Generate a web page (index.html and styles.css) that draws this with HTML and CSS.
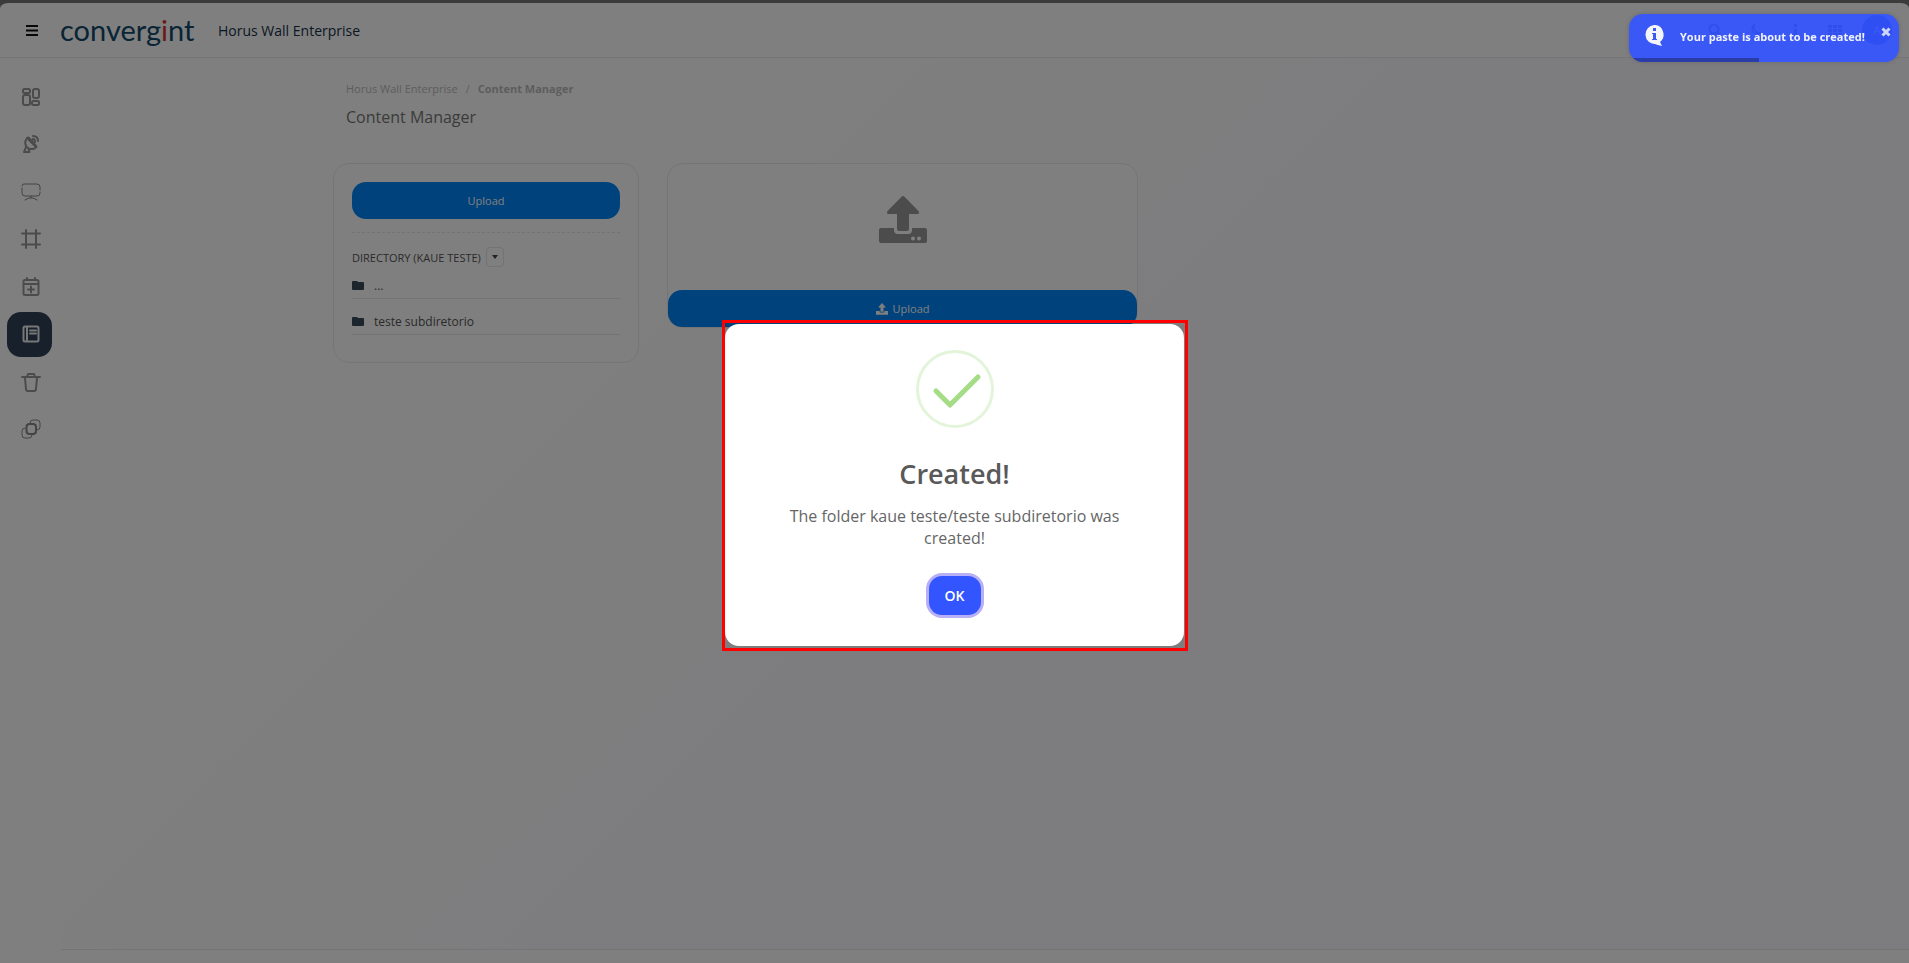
FILE: index.html
```html
<!DOCTYPE html>
<html lang="en">
<head>
    <meta charset="UTF-8">
    <meta name="viewport" content="width=device-width, initial-scale=1.0">
    <title>Content Manager - Horus Wall Enterprise</title>
    <link rel="stylesheet" href="styles.css">
</head>
<body>
    <div class="page">
        <header class="topbar">
            <button class="menu-btn" type="button" aria-label="Menu">
                <svg width="12" height="11" viewBox="0 0 12 11"><path d="M0 1h12M0 5.500h12M0 10h12" stroke="currentColor" stroke-width="2"/></svg>
            </button>
            <a class="logo" href="#">
                <span>converg<span class="logo-i">i</span>nt</span>
                <svg width="3" height="3" viewBox="0 0 3 3"><circle cx="1.500" cy="1.500" r="1" fill="#6f93a8"/></svg>
            </a>
            <span class="brand">Horus Wall Enterprise</span>
            <div class="topbar-tools">
                <button type="button" aria-label="Search"><svg width="14" height="14" viewBox="0 0 14 14"><path d="M10 10l3 3M1.500 6a4.500 4.500 0 1 0 9 0a4.500 4.500 0 1 0-9 0" fill="none" stroke="currentColor" stroke-width="2"/></svg></button>
                <button type="button" aria-label="Dark mode"><svg width="14" height="14" viewBox="0 0 14 14"><path d="M6 2a5 5 0 1 0 6 8A6 6 0 0 1 6 2z" fill="none" stroke="currentColor" stroke-width="1.500"/></svg></button>
                <button type="button" aria-label="Info"><svg width="14" height="14" viewBox="0 0 14 14"><path d="M6 1h3v3H6zM5 6h4v6h1v1H5v-1h1V7H5z" fill="currentColor"/></svg></button>
                <button type="button" aria-label="Apps"><svg width="14" height="14" viewBox="0 0 14 14"><path d="M0 2h4v3H0zM5 2h4v3H5zM10 2h4v3h-4zM0 6h4v3H0zM5 6h4v3H5zM10 6h4v3h-4zM0 10h4v3H0zM5 10h4v3H5zM10 10h4v3h-4z" fill="currentColor"/></svg></button>
                <button class="avatar" type="button">A</button>
            </div>
        </header>

        <div class="layout">
            <nav class="sidebar" aria-label="Main">
                <a href="#" aria-label="Dashboard"><svg viewBox="0 0 20 20"><rect x="2" y="2" width="7" height="4" rx="1.500"/><rect x="2" y="8" width="7" height="10" rx="2"/><rect x="12" y="2" width="6" height="9" rx="2"/><rect x="11" y="14" width="7" height="4" rx="1.500"/></svg></a>
                <a href="#" aria-label="Signal"><svg viewBox="0 0 20 20"><path d="M6 4C3 8 4 12 7 14s7 1 8-1zM6 4q1-1 2 0l7 8q1 1 0 1M5 13l-2 5h5.500l-1-3M10 8l2-3M12 5q2 0 2 3M12 2q5 0 5 5"/></svg></a>
                <a href="#" aria-label="Displays"><svg class="thin" viewBox="0 0 20 20"><path d="M1 4q0-2 2-2h13q3 0 3 3v3M19 10v1q0 3-3 3H4q-3 0-3-3V6M10 14v2M4 18l4-2h4l4 2"/></svg></a>
                <a href="#" aria-label="Layouts"><svg viewBox="0 0 20 20"><path d="M5 1v18M15 1v18M1 4.500h18M1 15.500h18"/></svg></a>
                <a href="#" aria-label="Schedule"><svg viewBox="0 0 20 20"><rect x="2.500" y="3" width="15" height="15" rx="1.500"/><path d="M6 1v2M14 1v2M3 7h14M10 9.500v6M7 12.500h6"/></svg></a>
                <a class="active" href="#" aria-label="Content Manager"><svg viewBox="0 0 20 20"><rect x="2.500" y="2.500" width="15" height="15" rx="1.500"/><path d="M6 3v14M9 6.500h6M9 9.500h6"/></svg></a>
                <a href="#" aria-label="Trash"><svg viewBox="0 0 20 20"><path d="M1 5h18M6 5l1-3h6l1 3M4 6l1 11q0 2 2 2h6q2 0 2-2l1-11"/></svg></a>
                <a href="#" aria-label="Integrations"><svg class="thin" viewBox="0 0 20 20"><rect x="5.500" y="5" width="9.500" height="10" rx="3" stroke-width="2"/><path d="M9 4q0-3 3-3h4q3 0 3 3v4q0 3-3 3M11 16q0 3-3 3H4q-3 0-3-3v-4q0-3 3-3"/></svg></a>
            </nav>

            <main class="main">
                <div class="container">
                    <nav class="breadcrumb" aria-label="Breadcrumb">
                        <a href="#">Horus Wall Enterprise</a>
                        <span>/</span>
                        <strong>Content Manager</strong>
                    </nav>
                    <h1>Content Manager</h1>

                    <div class="cards">
                        <section class="card directory">
                            <button class="btn" type="button">Upload</button>
                            <hr>
                            <div class="directory-head">
                                <span>DIRECTORY (KAUE TESTE)</span>
                                <button class="caret-btn" type="button" aria-label="Directory options">
                                    <svg width="6" height="4" viewBox="0 0 6 4"><path d="M0 0h6L3 4z" fill="currentColor"/></svg>
                                </button>
                            </div>
                            <ul class="folders">
                                <li>
                                    <svg width="12" height="9" viewBox="0 0 12 9"><path d="M0 1q0-1 1-1h4l1 1h5q1 0 1 1v6q0 1-1 1H1q-1 0-1-1z" fill="currentColor"/></svg>
                                    <a href="#">...</a>
                                </li>
                                <li>
                                    <svg width="12" height="9" viewBox="0 0 12 9"><path d="M0 1q0-1 1-1h4l1 1h5q1 0 1 1v6q0 1-1 1H1q-1 0-1-1z" fill="currentColor"/></svg>
                                    <a href="#">teste subdiretorio</a>
                                </li>
                            </ul>
                        </section>

                        <section class="card dropzone">
                            <div class="dropzone-area">
                                <svg width="48" height="48" viewBox="0 0 48 48" fill="currentColor"><path d="M22.500.8q1.500-1.500 3 0L39.500 15q1.500 3-1 3H30v15q0 2-2 2h-8q-2 0-2-2V18H9.500q-2.500 0-1-3z"/><path fill-rule="evenodd" d="M2 32h13v2q0 4 4 4h10q4 0 4-4v-2h13q2 0 2 2v11q0 2-2 2H2q-2 0-2-2V34q0-2 2-2zM32 42.500a2 2 0 1 0 4 0a2 2 0 1 0-4 0M38 42.500a2 2 0 1 0 4 0a2 2 0 1 0-4 0"/></svg>
                            </div>
                            <button class="btn" type="button">
                                <svg width="12" height="12" viewBox="0 0 48 48" fill="currentColor"><path d="M24 0l16 18H30v17H18V18H8z"/><path d="M0 32h15v6h18v-6h15v15H0z"/></svg>
                                Upload
                            </button>
                        </section>
                    </div>
                </div>
            </main>
        </div>

        <footer class="footer"></footer>
    </div>

    <div class="overlay">
        <div class="highlight">
            <div class="modal" role="dialog" aria-labelledby="modal-title">
                <svg class="modal-icon" width="78" height="78" viewBox="0 0 78 78" fill="none">
                    <circle cx="39" cy="39" r="37.500" stroke="#e4f4db" stroke-width="3"/>
                    <path d="M20 41l14 14 28-28" stroke="#a5dc86" stroke-width="5" stroke-linecap="round" stroke-linejoin="round"/>
                </svg>
                <h2 id="modal-title">Created!</h2>
                <p>The folder kaue teste/teste subdiretorio was created!</p>
                <button class="ok-btn" type="button">OK</button>
            </div>
        </div>
    </div>

    <div class="toast" role="status">
        <svg width="19" height="22" viewBox="0 0 19 22"><path d="M9 0a9 9.500 0 0 1 6 17l2 4q-5-1-7-2A9 9.500 0 1 1 9 0z" fill="#f4f5fa"/><path d="M8 3h3v3H8zM7 8h4v6h1v1H7v-1h1V9H7z" fill="#3d5af3"/></svg>
        <span class="toast-text">Your paste is about to be created!</span>
        <button class="toast-close" type="button" aria-label="Close">
            <svg width="10" height="10" viewBox="0 0 10 10"><path d="M1.500 1.500l7 7M8.500 1.500l-7 7" stroke="currentColor" stroke-width="3"/></svg>
        </button>
        <div class="toast-progress"></div>
    </div>
</body>
</html>
```

FILE: styles.css
```css
* {
    box-sizing: border-box;
}
body {
    font-family: 'Open Sans', 'Noto Sans', sans-serif;
    font-size: 12px;
    margin: 0;
    background-color: #777;
    color: #555;
}
button {
    font-family: inherit;
    border: none;
    padding: 0;
    background: none;
    cursor: pointer;
}
a {
    color: inherit;
    text-decoration: none;
}
svg {
    display: block;
}
.page {
    display: flex;
    flex-direction: column;
    min-height: 100vh;
    border-top: 3px solid #777;
    background-color: #fff;
    background-clip: padding-box;
    border-radius: 8px 8px 0 0;
}

/* top bar */
.topbar {
    display: flex;
    align-items: center;
    height: 55px;
    padding: 0 17px 0 26px;
    border-bottom: 1px solid #ebebeb;
}
.menu-btn {
    color: #111;
}
.logo {
    display: flex;
    align-items: center;
    width: 135px;
    margin-left: 22px;
    font-family: Lato, sans-serif;
    font-size: 29px;
    line-height: 36px;
    color: #124a6b;
}
.logo svg {
    margin: 0 0 17px 1px;
}
.logo .logo-i {
    color: #d8322c;
}
.brand {
    margin-left: 23px;
    font-size: 14px;
    font-weight: 500;
    color: #14304a;
}
.topbar-tools {
    display: flex;
    align-items: center;
    gap: 26px;
    margin-left: auto;
    color: #333;
}
.avatar {
    width: 30px;
    height: 30px;
    margin-left: -6px;
    border-radius: 50%;
    background-color: #0b1fd0;
    color: #fff;
}

/* sidebar */
.layout {
    display: flex;
    flex: 1;
}
.sidebar {
    display: flex;
    flex-direction: column;
    justify-content: space-between;
    width: 61px;
    height: 394px;
    padding: 16px 9px 0 7px;
}
.sidebar a {
    display: flex;
    align-items: center;
    justify-content: center;
    width: 45px;
    height: 45px;
    border-radius: 14px;
    color: #969696;
}
.sidebar svg {
    width: 20px;
    height: 20px;
    margin-left: 3px;
    fill: none;
    stroke: currentColor;
    stroke-width: 2;
    stroke-linecap: round;
    stroke-linejoin: round;
}
.sidebar .thin {
    stroke-width: 1;
    color: #888;
}
.sidebar .active {
    background-color: #304356;
    color: #eee;
}

/* content */
.main {
    flex: 1;
    padding: 23px 20px;
    background: linear-gradient(135deg, #fff 20%, #fbfbfe 50%);
}
.container {
    max-width: 1304px;
    margin: 0 auto;
}
.breadcrumb {
    display: flex;
    gap: 8px;
    padding-left: 13px;
    font-size: 11px;
    line-height: 16px;
    color: #bbb;
}
h1 {
    margin: 8px 0 34px 13px;
    font-size: 16px;
    line-height: 24px;
    font-weight: 400;
    color: #777;
}
.cards {
    display: grid;
    grid-template-columns: 13fr 20fr 20fr;
    align-items: start;
    gap: 28px;
}
.card {
    border: 1px solid #ebebeb;
    border-radius: 16px;
    background-color: #fff;
}
.btn {
    display: flex;
    align-items: center;
    justify-content: center;
    gap: 5px;
    width: 100%;
    height: 37px;
    border-radius: 14px;
    background-color: #0084f8;
    color: #fff;
    font-size: 11px;
}
.directory {
    padding: 18px 18px 27px;
}
.directory hr {
    margin: 13px 0 14px;
    border: none;
    border-top: 1px dashed #e6e6e6;
}
.directory-head {
    display: flex;
    align-items: center;
    gap: 5px;
    font-size: 11px;
}
.caret-btn {
    display: flex;
    align-items: center;
    justify-content: center;
    width: 18px;
    height: 20px;
    border: 1px solid #e6e6e6;
    border-radius: 4px;
    color: #444;
}
.folders {
    list-style: none;
    margin: 0;
    padding: 0;
}
.folders li {
    display: flex;
    align-items: center;
    gap: 10px;
    height: 32px;
    padding-top: 5px;
    border-bottom: 1px solid #e6e6e6;
}
.folders li + li {
    height: 36px;
    padding-top: 9px;
}
.folders svg {
    color: #3a4a58;
}
.dropzone-area {
    display: flex;
    justify-content: center;
    height: 126px;
    padding-top: 32px;
    color: #999;
}
.footer {
    height: 14px;
    margin-left: 61px;
    border-top: 1px solid #ebebeb;
}

/* dialog */
.overlay {
    position: fixed;
    inset: 0;
    display: flex;
    align-items: center;
    justify-content: center;
    padding: 8px 0 0 1px;
    background-color: rgba(0, 0, 0, 0.5);
}
.highlight {
    width: 466px;
    padding: 1px 1px 2px 0;
    border: 3px solid #f00;
}
.modal {
    display: flex;
    flex-direction: column;
    align-items: center;
    padding: 26px 48px 31px;
    border-radius: 14px;
    background-color: #fff;
    text-align: center;
}
.modal h2 {
    margin: 28px 0 13px;
    font-size: 27px;
    line-height: 36px;
    font-weight: 600;
    color: #595959;
}
.modal p {
    margin: 0 0 27px;
    font-size: 16px;
    line-height: 22px;
    color: #666;
}
.ok-btn {
    width: 52px;
    height: 39px;
    border-radius: 13px;
    background-color: #3355ff;
    box-shadow: 0 0 0 3px #b8b0f7;
    color: #fff;
    font-size: 14px;
    font-weight: 600;
}

/* toast */
.toast {
    position: fixed;
    top: 14px;
    right: 10px;
    display: flex;
    align-items: center;
    width: 270px;
    height: 48px;
    padding: 0 8px 4px 16px;
    border-radius: 14px;
    overflow: hidden;
    background-color: rgba(51, 85, 255, 0.92);
    box-shadow: 0 0 4px rgba(90, 90, 90, 0.6);
    color: #f0f2fd;
}
.toast-text {
    margin-left: 16px;
    font-size: 11px;
    font-weight: 700;
    white-space: nowrap;
}
.toast-close {
    align-self: flex-start;
    margin: 13px 0 0 auto;
    color: #cfd5f8;
}
.toast-progress {
    position: absolute;
    left: 0;
    bottom: 0;
    width: 130px;
    height: 4px;
    background-color: #2a3ca5;
}
```
